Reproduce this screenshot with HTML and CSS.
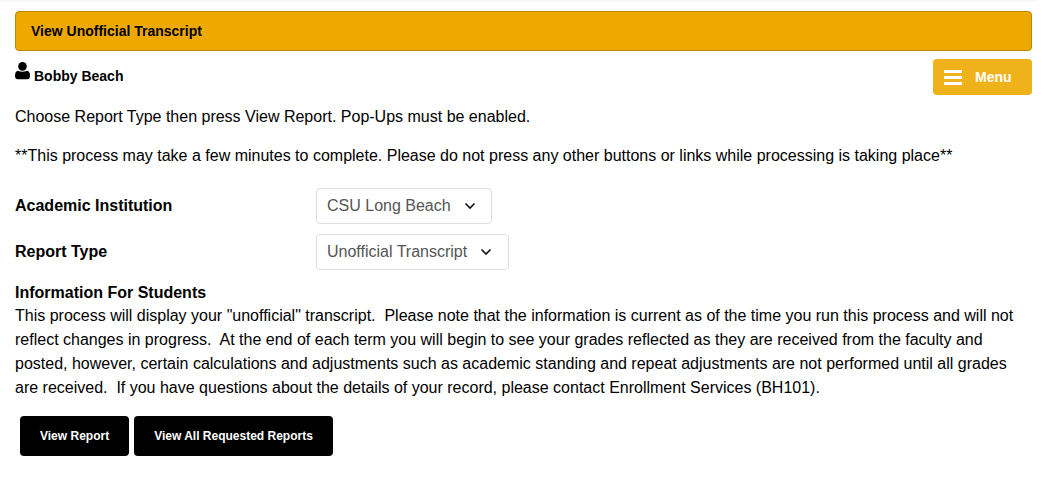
FILE: index.html
```html
<!DOCTYPE html>
<html lang="en">
<head>
<meta charset="utf-8">
<title>View Unofficial Transcript</title>
<link rel="stylesheet" href="styles.css">
</head>
<body>
<div class="strip"></div>
<main class="page">
  <h1 class="banner">View Unofficial Transcript</h1>
  <div class="userbar">
    <div class="user">
      <svg class="user-icon" viewBox="0 0 15 18" aria-hidden="true"><ellipse cx="7.500" cy="4.400" rx="4.300" ry="4.400"/><path d="M3 8.800c.8 0 1.400.9 4.500.9s3.700-.9 4.500-.9c2 0 3 2.200 3 5.200 0 2-1 3.300-2.700 3.300H2.700C1 17.300 0 16 0 14c0-3 1-5.200 3-5.200z"/></svg>
      <span class="user-name">Bobby Beach</span>
    </div>
    <button class="menu-btn" type="button">
      <span class="bars"><i></i><i></i><i></i></span>
      <span>Menu</span>
    </button>
  </div>
  <p class="intro">Choose Report Type then press View Report. Pop-Ups must be enabled.</p>
  <p class="warning">**This process may take a few minutes to complete. Please do not press any other buttons or links while processing is taking place**</p>
  <div class="field first">
    <label class="field-label">Academic Institution</label>
    <div class="select">CSU Long Beach<svg class="chev" viewBox="0 0 12 8"><path d="M1.500 1.500 6 6l4.500-4.500"/></svg></div>
  </div>
  <div class="field">
    <label class="field-label">Report Type</label>
    <div class="select wide">Unofficial Transcript<svg class="chev" viewBox="0 0 12 8"><path d="M1.500 1.500 6 6l4.500-4.500"/></svg></div>
  </div>
  <section class="info">
    <h2 class="info-title">Information For Students</h2>
    <p class="info-text">This process will display your "unofficial" transcript.&nbsp; Please note that the information is current as of the time you run this process and will not reflect changes in progress.&nbsp; At the end of each term you will begin to see your grades reflected as they are received from the faculty and posted, however, certain calculations and adjustments such as academic standing and repeat adjustments are not performed until all grades are received.&nbsp; If you have questions about the details of your record, please contact Enrollment Services (BH101).</p>
  </section>
  <div class="actions">
    <button class="action" type="button">View Report</button>
    <button class="action" type="button">View All Requested Reports</button>
  </div>
</main>
</body>
</html>
```
FILE: styles.css
```css
* { box-sizing: border-box; }
html, body { margin: 0; background: #fff; }
body { font-family: "Liberation Sans", Arial, sans-serif; font-size: 16px; color: #000; height: 478px; overflow: hidden; }
.strip { height: 2px; width: 1037px; background: #f8f8f8; }
.page { padding: 9px 12px 0 15px; }
.banner { margin: 0; height: 40px; display: flex; align-items: center; padding-left: 15px; background: #eda900; border: 1px solid #bd8700; border-radius: 4px; font-size: 14px; font-weight: bold; }
.userbar { display: flex; justify-content: space-between; align-items: flex-start; margin-top: 8px; height: 36px; }
.user { display: flex; align-items: flex-start; }
.user-icon { width: 15px; height: 18px; margin-top: 3px; fill: #000; }
.user-name { margin: 9px 0 0 4px; font-size: 14px; font-weight: bold; line-height: 16px; }
.menu-btn { width: 99px; height: 36px; display: flex; align-items: center; padding: 0 0 0 11px; border: 0; border-radius: 4px; background: #efb21a; color: #fff; font: bold 14px "Liberation Sans", Arial, sans-serif; }
.bars { width: 18px; margin-right: 13px; display: flex; flex-direction: column; gap: 3px; }
.bars i { display: block; height: 3px; background: #fff; }
.intro, .warning { margin: 0; line-height: 22px; }
.intro { margin-top: 11px; }
.warning { margin-top: 17px; }
.field { display: flex; align-items: center; height: 36px; margin-top: 10px; }
.field.first { margin-top: 21px; }
.field-label { width: 301px; font-weight: bold; }
.select { height: 36px; display: flex; align-items: center; padding: 0 15px 0 10px; border: 1px solid #ddd; border-radius: 4px; color: #555; }
.select.wide { padding-right: 16px; }
.chev { width: 12px; height: 8px; margin-left: 13px; fill: none; stroke: #111; stroke-width: 1.600; }
.info { margin-top: 13px; }
.info-title { margin: 0; font-size: 16px; line-height: 20px; font-weight: bold; }
.info-text { margin: 1px 0 0; line-height: 24px; }
.actions { display: flex; gap: 5px; margin: 16px 0 0 5px; }
.action { height: 40px; padding: 0 20px; border: 0; border-radius: 4px; background: #000; color: #fff; font: bold 12px "Liberation Sans", Arial, sans-serif; }
```
